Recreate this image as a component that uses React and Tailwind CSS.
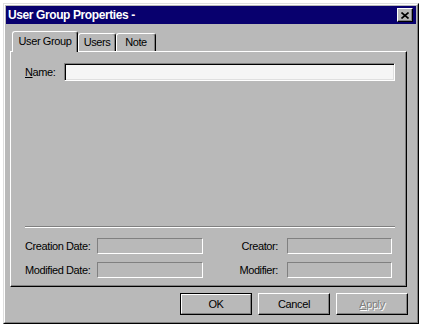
const Raised = ({ className = "", children }) => (
  <div
    className={`border border-t-white border-l-white border-r-black border-b-black shadow-[inset_-1px_-1px_0_#808080] ${className}`}
  >
    {children}
  </div>
);

const Field = ({ className = "" }) => (
  <div
    className={`h-[16px] border border-t-[#808080] border-l-[#808080] border-r-white border-b-white ${className}`}
  />
);

const CloseButton = () => (
  <Raised className="w-[16px] h-[14px] bg-[#b9b9b9] flex items-center justify-center">
    <svg width="8" height="7" viewBox="0 0 8 7" className="-ml-[1px]">
      <path d="M0.5 0.5 L7.5 6.5 M7.5 0.5 L0.5 6.5" stroke="#000" strokeWidth="1.6" fill="none" />
    </svg>
  </Raised>
);

const Tab = ({ active, className = "", children }) => (
  <div
    className={`flex items-center justify-center border-l border-t border-r border-l-white border-t-white border-r-black rounded-t-[3px] shadow-[inset_-1px_0_0_#808080] bg-[#b9b9b9] ${
      active ? "h-[21px] -mb-[1px] relative z-10 pb-[2px]" : "h-[18px]"
    } ${className}`}
  >
    {children}
  </div>
);

export default function App() {
  return (
    <div className="w-[424px] h-[326px] bg-white pl-[3px] pt-[3px] font-['Liberation_Sans',Arial,sans-serif] text-[11px] tracking-[-0.4px] text-black">
      <div className="w-[416px] h-[321px] border border-t-[#dfdfdf] border-l-[#dfdfdf] border-r-black border-b-black">
        <div className="h-full border border-t-white border-l-white border-r-[#808080] border-b-[#808080] bg-[#b9b9b9] p-[1px] flex flex-col">
          {/* title bar */}
          <div className="h-[18px] bg-[#08006e] flex items-center justify-between pl-[2px] pr-[3px]">
            <span className="text-white font-bold text-[12px] tracking-[-0.4px]">
              User Group Properties -
            </span>
            <CloseButton />
          </div>

          <div className="pl-[4px] pt-[7px]">
            {/* tabs */}
            <div className="flex items-end ml-[2px]">
              <Tab active className="w-[66px]">User Group</Tab>
              <Tab className="w-[38px]">Users</Tab>
              <Tab className="w-[40px]">Note</Tab>
            </div>

            {/* tab page */}
            <div className="w-[397px] h-[236px] border border-t-white border-l-white border-r-black border-b-black shadow-[inset_-1px_-1px_0_#808080] pl-[14px] pt-[11px]">
              <div className="flex items-center">
                <label className="w-[39px]">
                  <span className="underline underline-offset-[1px]">N</span>ame:
                </label>
                <div className="w-[331px] h-[18px] border border-t-[#808080] border-l-[#808080] border-r-white border-b-white">
                  <div className="h-full bg-[#f5f5f5] shadow-[inset_1px_1px_0_#000,inset_-1px_-1px_0_#dfdfdf]" />
                </div>
              </div>

              <div className="mt-[145px] w-[370px] h-[2px] border-t border-b border-t-[#808080] border-b-white" />

              <div className="mt-[10px] flex items-center">
                <span className="w-[72px]">Creation Date:</span>
                <Field className="w-[106px]" />
                <span className="w-[84px] pr-[9px] text-right">Creator:</span>
                <Field className="w-[105px]" />
              </div>
              <div className="mt-[7px] flex items-center">
                <span className="w-[72px]">Modified Date:</span>
                <Field className="w-[106px]" />
                <span className="w-[84px] pr-[9px] text-right">Modifier:</span>
                <Field className="w-[105px]" />
              </div>
            </div>

            {/* buttons */}
            <div className="w-[398px] mt-[6px] flex justify-end gap-[6px]">
              <div className="w-[72px] h-[22px] border border-black">
                <div className="h-full border border-t-white border-l-white border-r-[#808080] border-b-[#808080] flex items-center justify-center">
                  OK
                </div>
              </div>
              <Raised className="w-[72px] h-[22px] flex items-center justify-center">
                Cancel
              </Raised>
              <Raised className="w-[72px] h-[22px] flex items-center justify-center text-[#808080] [text-shadow:1px_1px_0_#ffffff]">
                <span>
                  <span className="underline underline-offset-[1px]">A</span>pply
                </span>
              </Raised>
            </div>
          </div>
        </div>
      </div>
    </div>
  );
}
